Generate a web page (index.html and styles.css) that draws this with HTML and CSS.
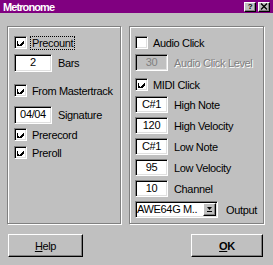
FILE: index.html
```html
<!DOCTYPE html>
<html lang="en">
<head>
<meta charset="UTF-8">
<meta name="viewport" content="width=device-width, initial-scale=1.0">
<title>Metronome</title>
<link rel="stylesheet" href="styles.css">
</head>
<body>

<div class="dialog">
    <div class="titlebar">
        <span class="title">Metronome</span>
        <div class="caption-btns">
            <span class="cbtn cbtn-help">?</span>
            <span class="cbtn">
                <svg width="8" height="7" viewBox="0 0 8 7"><path d="M1 0.5 L7 6.5 M7 0.5 L1 6.5" stroke="#000" stroke-width="1.4"/></svg>
            </span>
        </div>
    </div>

    <div class="panes">
        <div class="group group-left">
            <div class="row check-row">
                <span class="check checked"></span>
                <span class="label focus">Precount</span>
            </div>
            <div class="row field-row mt4">
                <span class="field">2</span>
                <span class="field-label">Bars</span>
            </div>
            <div class="row check-row mt12">
                <span class="check checked"></span>
                <span class="label">From Mastertrack</span>
            </div>
            <div class="row field-row mt8">
                <span class="field">04/04</span>
                <span class="field-label">Signature</span>
            </div>
            <div class="row check-row mt4">
                <span class="check checked"></span>
                <span class="label">Prerecord</span>
            </div>
            <div class="row check-row mt4">
                <span class="check checked"></span>
                <span class="label">Preroll</span>
            </div>
        </div>

        <div class="group group-right">
            <div class="row check-row">
                <span class="check"></span>
                <span class="label">Audio Click</span>
            </div>
            <div class="row field-row mt4">
                <span class="field field-sm disabled">30</span>
                <span class="field-label disabled-label">Audio Click Level</span>
            </div>
            <div class="row check-row mt7">
                <span class="check checked"></span>
                <span class="label">MIDI Click</span>
            </div>
            <div class="row field-row mt4">
                <span class="field field-sm">C#1</span>
                <span class="field-label">High Note</span>
            </div>
            <div class="row field-row mt4">
                <span class="field field-sm">120</span>
                <span class="field-label">High Velocity</span>
            </div>
            <div class="row field-row mt4">
                <span class="field field-sm">C#1</span>
                <span class="field-label">Low Note</span>
            </div>
            <div class="row field-row mt4">
                <span class="field field-sm">95</span>
                <span class="field-label">Low Velocity</span>
            </div>
            <div class="row field-row mt4">
                <span class="field field-sm">10</span>
                <span class="field-label">Channel</span>
            </div>
            <div class="row field-row mt4">
                <div class="select">
                    <span class="select-text">AWE64G M..</span>
                    <span class="select-btn">
                        <svg width="7" height="7" viewBox="0 0 7 7"><path d="M1 1 H6 L3.5 4 Z" fill="#000"/><rect x="1" y="5" width="5" height="1" fill="#000"/></svg>
                    </span>
                </div>
                <span class="field-label output-label">Output</span>
            </div>
        </div>
    </div>

    <div class="buttons">
        <button class="btn btn-help"><u>H</u>elp</button>
        <button class="btn btn-ok"><u>O</u>K</button>
    </div>
</div>

</body>
</html>
```

FILE: styles.css
```css
body {
    margin: 0;
    background: #c0c0c0;
    font-family: "Liberation Sans", Arial, sans-serif;
    font-size: 11px;
    letter-spacing: -0.35px;
    color: #000;
}

.dialog {
    width: 273px;
    height: 265px;
}

.titlebar {
    height: 13px;
    background: #800080;
    color: #fff;
    display: flex;
    align-items: center;
    justify-content: space-between;
    padding: 0 3px;
}

.title {
    font-weight: bold;
    font-size: 11px;
    letter-spacing: -0.9px;
}

.caption-btns {
    display: flex;
    gap: 2px;
}

.cbtn {
    box-sizing: border-box;
    width: 12px;
    height: 10px;
    background: #c0c0c0;
    border: 1px solid;
    border-color: #fff #000 #000 #fff;
    box-shadow: inset -1px -1px 0 #808080;
    display: flex;
    align-items: center;
    justify-content: center;
    color: #000;
}

.cbtn-help {
    font-size: 8px;
    font-weight: bold;
    line-height: 8px;
}

.panes {
    display: flex;
    gap: 8px;
    padding: 13px 0 0 7px;
}

.group {
    box-sizing: border-box;
    height: 198px;
    border: 1px solid #808080;
    box-shadow: inset 1px 1px 0 #fff, 1px 1px 0 #fff;
}

.group-left {
    width: 114px;
    padding: 9px 0 0 6px;
}

.group-right {
    width: 135px;
    padding: 9px 0 0 5px;
}

.row {
    display: flex;
}

.check-row {
    align-items: flex-start;
    height: 14px;
}

.field-row {
    align-items: center;
}

.mt4 { margin-top: 4px; }
.mt7 { margin-top: 7px; }
.mt8 { margin-top: 8px; }
.mt12 { margin-top: 12px; }

.check {
    box-sizing: border-box;
    width: 13px;
    height: 13px;
    background: #fff;
    border: 1px solid;
    border-color: #808080 #fff #fff #808080;
    box-shadow: inset 1px 1px 0 #000, inset -1px -1px 0 #dfdfdf;
    margin-right: 3px;
    position: relative;
}

.check.checked::after {
    content: "";
    position: absolute;
    left: 2px;
    top: 2px;
    width: 7px;
    height: 7px;
    background: url("data:image/svg+xml,%3Csvg xmlns='http://www.w3.org/2000/svg' width='7' height='7' shape-rendering='crispEdges'%3E%3Cpath d='M0 2h1v3h1v1h1v-1h1v-1h1v-1h1v-1h1v3h-1v1h-1v1h-1v1h-1v1h-1v-1h-1v-1h-1z' fill='%23000'/%3E%3C/svg%3E") no-repeat;
}

.label {
    line-height: 12px;
    padding: 0 1px;
    border: 1px solid transparent;
    white-space: nowrap;
}

.label.focus {
    border: 1px dotted #000;
}

.field {
    box-sizing: border-box;
    width: 38px;
    height: 18px;
    background: #fff;
    border: 1px solid;
    border-color: #808080 #fff #fff #808080;
    box-shadow: inset 1px 1px 0 #000, inset -1px -1px 0 #dfdfdf;
    text-align: center;
    line-height: 15px;
}

.field-sm {
    width: 33px;
    height: 17px;
    line-height: 14px;
}

.field.disabled {
    background: #c0c0c0;
    color: #808080;
}

.field-label {
    margin-left: 6px;
    white-space: nowrap;
}

.disabled-label {
    color: #808080;
    text-shadow: 1px 1px 0 #fff;
}

.select {
    box-sizing: border-box;
    width: 83px;
    height: 17px;
    display: flex;
    background: #fff;
    border: 1px solid;
    border-color: #808080 #fff #fff #808080;
    box-shadow: inset 1px 1px 0 #000, inset -1px -1px 0 #dfdfdf;
    padding: 1px;
}

.select-text {
    flex: 1;
    line-height: 13px;
    white-space: nowrap;
    overflow: hidden;
}

.select-btn {
    box-sizing: border-box;
    width: 13px;
    height: 13px;
    background: #c0c0c0;
    border: 1px solid;
    border-color: #fff #000 #000 #fff;
    box-shadow: inset -1px -1px 0 #808080;
    display: flex;
    align-items: center;
    justify-content: center;
}

.output-label {
    margin-left: 8px;
}

.buttons {
    display: flex;
    justify-content: space-between;
    padding: 10px 10px 0 8px;
}

.btn {
    box-sizing: border-box;
    height: 23px;
    background: #c0c0c0;
    border: 1px solid;
    border-color: #fff #000 #000 #fff;
    box-shadow: inset -1px -1px 0 #808080;
    font-family: inherit;
    font-size: 11px;
    letter-spacing: inherit;
    color: #000;
    padding: 0;
}

.btn-help {
    width: 75px;
}

.btn-ok {
    width: 72px;
    font-weight: bold;
}
```
